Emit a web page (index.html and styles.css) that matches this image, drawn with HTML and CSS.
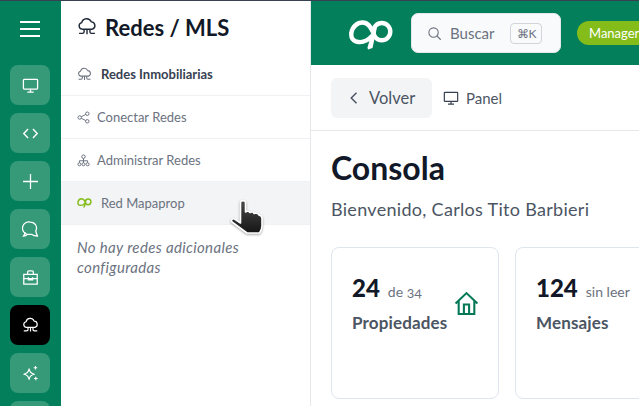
FILE: index.html
```html
<!DOCTYPE html>
<html lang="es">
<head>
<meta charset="utf-8">
<title>Consola</title>
<link rel="stylesheet" href="styles.css">
</head>
<body>
<svg class="defs" width="0" height="0" aria-hidden="true">
  <symbol id="cloud" viewBox="0 0 24 24"><path d="M6.200 14.600a4 4 0 0 1-.5-7.900 6 6 0 0 1 11.400-.9 4.500 4.500 0 0 1 1.200 8.800z" fill="none" stroke="currentColor" stroke-width="1.700" stroke-linejoin="round"/><path d="M12 14.600v6M8.500 14.600v3a2 2 0 0 1-2 2H2.500M15.500 14.600v3a2 2 0 0 0 2 2h4" fill="none" stroke="currentColor" stroke-width="1.700"/></symbol>
  <symbol id="monitor" viewBox="0 0 24 24"><path d="M3 3.500h18a1 1 0 0 1 1 1v11.500a1 1 0 0 1-1 1H3a1 1 0 0 1-1-1V4.500a1 1 0 0 1 1-1zM12 17v4M7.500 21.200h9" fill="none" stroke="currentColor" stroke-width="1.800"/></symbol>
  <symbol id="oplogo" viewBox="0 0 44 30">
    <path d="M23.500 15.500C19 20.500 14 22.500 9.500 22 4 21.500 1.500 17.500 2.500 12.500 3.500 6.500 8.500 2.500 13.500 2.500c5.500 0 8 4 10.500 9.500" fill="none" stroke="currentColor" stroke-width="4.400"/>
    <ellipse cx="32.800" cy="11.600" rx="8.500" ry="8.600" fill="none" stroke="currentColor" stroke-width="4.400"/>
    <path d="M24.500 7 28.500 5 23.500 28 19 29.500 18.500 27.500z" fill="currentColor"/>
  </symbol>
</svg>
<div class="app">
  <nav class="rail">
    <button class="menu" aria-label="Menú"><span></span><span></span><span></span></button>
    <a class="rail-btn"><svg class="ic"><use href="#monitor"/></svg></a>
    <a class="rail-btn"><svg class="ic" viewBox="0 0 24 24"><path d="M8.500 5.500 2.500 12l6 6.500M15.500 5.500l6 6.500-6 6.500" fill="none" stroke="currentColor" stroke-width="2"/></svg></a>
    <a class="rail-btn"><svg class="ic" viewBox="0 0 24 24"><path d="M12 1.500v21M1.500 12h21" fill="none" stroke="currentColor" stroke-width="1.800"/></svg></a>
    <a class="rail-btn"><svg class="ic" viewBox="0 0 24 24"><path d="M12 1.500a8.500 8.500 0 0 1 7.500 12.500c.3 2.500 1 5 2.500 7.500-3.500-.3-6.500-1.300-8-2.500H7.500A8.500 8.500 0 0 1 12 1.500z" fill="none" stroke="currentColor" stroke-width="1.800" stroke-linejoin="round"/><path d="M4.500 15.500C4.300 17.500 3.300 19.500 2 21.500c2.500-.2 4.300-1 5.500-2.500" fill="none" stroke="currentColor" stroke-width="1.800"/></svg></a>
    <a class="rail-btn"><svg class="ic" viewBox="0 0 24 24"><path d="M2.500 7.500h19v14h-19zM8 7.500V4a1.500 1.500 0 0 1 1.500-1.500h5A1.500 1.500 0 0 1 16 4v3.500M2.500 13.500h19M9 11.500v4h6v-4" fill="none" stroke="currentColor" stroke-width="1.800"/></svg></a>
    <a class="rail-btn is-active"><svg class="ic"><use href="#cloud"/></svg></a>
    <a class="rail-btn"><svg class="ic" viewBox="0 0 24 24"><path d="M10 5.500c.8 5 2.500 6.700 7.500 7.500-5 .8-6.700 2.500-7.500 7.500-.8-5-2.500-6.700-7.500-7.500 5-.8 6.700-2.500 7.500-7.500z" fill="none" stroke="currentColor" stroke-width="1.600" stroke-linejoin="round"/><path d="M19 1.500v5M16.500 4h5M19.500 16.500v5M17 19h5" fill="none" stroke="currentColor" stroke-width="1.500"/></svg></a>
    <a class="rail-btn"></a>
  </nav>

  <aside class="panel">
    <h2 class="panel-title"><svg class="title-ic"><use href="#cloud"/></svg>Redes / MLS</h2>
    <div class="row row-head"><svg class="row-ic-lg"><use href="#cloud"/></svg><span>Redes Inmobiliarias</span></div>
    <a class="row"><svg class="row-ic" viewBox="0 0 24 24"><circle cx="5" cy="12" r="3.200"/><circle cx="19" cy="5" r="3.200"/><circle cx="19" cy="19" r="3.200"/><path d="M8 10.500 16 6.500M8 13.500l8 4"/></svg><span>Conectar Redes</span></a>
    <a class="row"><svg class="row-ic" viewBox="0 0 24 24"><circle cx="12" cy="5" r="3.200"/><circle cx="4.500" cy="19" r="2.800"/><circle cx="12" cy="19" r="2.800"/><circle cx="19.500" cy="19" r="2.800"/><path d="M12 8.200v8M4.500 16v-3.500h15V16"/></svg><span>Administrar Redes</span></a>
    <a class="row row-active"><svg class="row-logo"><use href="#oplogo"/></svg><span>Red Mapaprop</span></a>
    <p class="empty">No hay redes adicionales configuradas</p>
  </aside>

  <main class="main">
    <header class="topbar">
      <svg class="logo"><use href="#oplogo"/></svg>
      <div class="search">
        <svg class="search-ic" viewBox="0 0 24 24"><circle cx="10.500" cy="10.500" r="7.500"/><path d="m16 16 6 6"/></svg>
        <span class="search-text">Buscar</span>
        <kbd class="kbd">⌘K</kbd>
      </div>
      <span class="pill">Manager</span>
    </header>
    <div class="subnav">
      <a class="back"><svg class="back-ic" viewBox="0 0 12 18"><path d="M10 2 3 9l7 7"/></svg>Volver</a>
      <span class="crumb"><svg class="crumb-ic"><use href="#monitor"/></svg>Panel</span>
    </div>
    <section class="content">
      <h1 class="heading">Consola</h1>
      <p class="welcome">Bienvenido, Carlos Tito Barbieri</p>
      <div class="cards">
        <article class="card">
          <div class="stat"><strong>24</strong><span>de 34</span></div>
          <div class="label">Propiedades</div>
          <svg class="card-ic" viewBox="0 0 24 24"><path d="M1.500 12 12 2l10.500 10M4.500 9.500V22h15V9.500M9.500 22v-9h5v9"/></svg>
        </article>
        <article class="card">
          <div class="stat"><strong>124</strong><span>sin leer</span></div>
          <div class="label">Mensajes</div>
        </article>
      </div>
    </section>
  </main>
</div>
<svg class="cursor" viewBox="0 0 36 36" aria-hidden="true">
  <defs><linearGradient id="hand" x1="0" y1="0" x2="0" y2="1"><stop offset="0" stop-color="#4a4a4a"/><stop offset="1" stop-color="#151515"/></linearGradient></defs>
  <path d="M10.500 3.500c0-2.500 5-2.500 5 0V13c1.500-1 3.500-.8 4.500.5 1.500-1 3.500-.5 4 1 1.500-.8 4-.3 5 1.500 1.500.3 3 1.500 3 3.500V27c0 3-1 5-2.500 7H17L2 23c-1.500-1.500.5-4 2.500-3l6 4z" fill="url(#hand)" stroke="#fff" stroke-width="1.600" stroke-linejoin="round"/>
</svg>
</body>
</html>
```
FILE: styles.css
```css
* { box-sizing: border-box; }
html, body { height: 100%; }
body {
  margin: 0;
  overflow: hidden;
  background: #fff;
  color: #111827;
  font-family: "Lato", "Open Sans", sans-serif;
  position: relative;
}
.defs { position: absolute; }
.app {
  display: flex;
  width: 639px;
  height: 406px;
  border-top: 1px solid #374151;
  overflow: hidden;
}
.rail {
  flex: 0 0 61px;
  display: flex;
  flex-direction: column;
  align-items: center;
  gap: 8px;
  padding-right: 1px;
  background: #047f5c;
  overflow: hidden;
}
.menu {
  flex: 0 0 56px;
  width: 20px;
  padding: 0;
  border: 0;
  background: none;
  display: flex;
  flex-direction: column;
  justify-content: center;
  gap: 5px;
}
.menu span { display: block; height: 2px; background: #fff; }
.rail-btn {
  flex: 0 0 40px;
  width: 40px;
  display: flex;
  align-items: center;
  justify-content: center;
  border-radius: 8px;
  background: #369978;
  color: #fff;
}
.rail-btn.is-active { background: #000; }
.ic { width: 17px; height: 17px; }

.panel {
  flex: 0 0 250px;
  border-right: 1px solid #e5e7eb;
  background: #fff;
}
.panel-title {
  margin: 0;
  height: 52px;
  padding: 0 0 0 16px;
  display: flex;
  align-items: center;
  gap: 8px;
  font-size: 22px;
  font-weight: 700;
  color: #111827;
}
.title-ic { width: 20px; height: 20px; color: #1f2937; }
.row {
  display: flex;
  align-items: center;
  height: 43px;
  padding-left: 16px;
  border-bottom: 1px solid #f0f1f3;
  font-size: 13px;
  color: #6b7280;
}
.row-head {
  font-weight: 700;
  color: #374151;
  gap: 9px;
}
.row-ic-lg { width: 15px; height: 15px; color: #6b7280; }
.row-ic {
  width: 13px;
  height: 13px;
  margin-right: 7px;
  fill: none;
  stroke: #6b7280;
  stroke-width: 1.800;
}
.row-active { background: #f3f4f6; gap: 9px; }
.row-logo { width: 15px; height: 10px; color: #84bd1a; }
.empty {
  margin: 12px 0 0;
  padding: 0 16px;
  font-size: 15px;
  line-height: 20px;
  letter-spacing: .35px;
  font-style: italic;
  color: #6b7280;
}

.main { flex: 0 0 328px; overflow: hidden; }
.topbar {
  height: 64px;
  display: flex;
  align-items: center;
  padding-left: 38px;
  background: #047f5c;
  white-space: nowrap;
}
.logo { flex: 0 0 44px; width: 44px; height: 30px; color: #fff; margin: 3px 18px 0 0; }
.search {
  flex: 0 0 150px;
  height: 40px;
  display: flex;
  align-items: center;
  padding-left: 15px;
  border-radius: 7px;
  border: 1px solid #e5e7eb;
  background: #f9fafb;
  color: #6b7280;
}
.search-ic { width: 15px; height: 15px; fill: none; stroke: #6b7280; stroke-width: 1.700; margin-right: 8px; }
.search-text { font-size: 15px; }
.kbd {
  margin-left: 16px;
  width: 32px;
  height: 21px;
  display: flex;
  align-items: center;
  justify-content: center;
  border: 1px solid #d1d5db;
  border-radius: 4px;
  font-family: "Lato", sans-serif;
  font-size: 12px;
  color: #6b7280;
}
.pill {
  margin-left: 16px;
  flex: 0 0 auto;
  height: 24px;
  line-height: 24px;
  padding: 0 12px;
  border-radius: 12px;
  background: #84bd1a;
  color: #fff;
  font-size: 13px;
}
.subnav {
  height: 66px;
  display: flex;
  align-items: center;
  padding-left: 20px;
  border-bottom: 1px solid #e5e7eb;
}
.back {
  width: 101px;
  height: 40px;
  margin-top: 1px;
  display: flex;
  align-items: center;
  padding-left: 18px;
  border-radius: 6px;
  background: #f3f4f6;
  color: #4b5563;
  font-size: 16.500px;
}
.back-ic { width: 9px; height: 14px; margin-right: 11px; fill: none; stroke: #4b5563; stroke-width: 2; }
.crumb {
  display: flex;
  align-items: center;
  margin-left: 11px;
  color: #4b5563;
  font-size: 15px;
}
.crumb-ic { width: 16px; height: 16px; margin-right: 7px; color: #374151; }
.content { padding: 17px 0 0 20px; }
.heading {
  margin: 0;
  font-size: 32px;
  line-height: 40px;
  font-weight: 700;
  color: #111827;
}
.welcome {
  margin: 11px 0 0;
  font-size: 18px;
  line-height: 20px;
  letter-spacing: .3px;
  color: #4b5563;
  white-space: nowrap;
}
.cards { display: flex; gap: 16px; margin-top: 28px; }
.card {
  position: relative;
  flex: 0 0 168px;
  height: 152px;
  padding: 25px 20px;
  border: 1px solid #dfe5ee;
  border-radius: 8px;
}
.stat { display: flex; align-items: baseline; gap: 8px; height: 28px; }
.stat strong { font-size: 24px; font-weight: 900; color: #111827; }
.stat span { font-size: 14px; color: #6b7280; font-variant-numeric: oldstyle-nums; }
.label { margin-top: 11px; font-size: 17px; letter-spacing: .15px; font-weight: 700; color: #4b5563; }
.card-ic {
  position: absolute;
  left: 122px;
  top: 43px;
  width: 25px;
  height: 25px;
  fill: none;
  stroke: #047857;
  stroke-width: 2;
}
.cursor {
  position: absolute;
  left: 230px;
  top: 199px;
  width: 36px;
  height: 36px;
  filter: drop-shadow(0 1px 1px rgba(0,0,0,.35));
}
```
